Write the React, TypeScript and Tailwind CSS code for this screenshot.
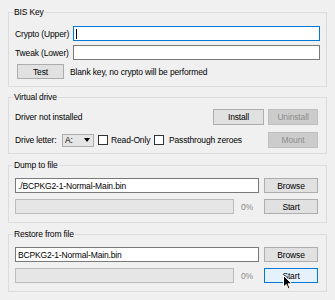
import React from "react";

function Group({ title, className, children }: { title: string; className: string; children: React.ReactNode }) {
  return (
    <div className={"relative border border-[#dcdcdc] " + className}>
      <span className="absolute top-[-7px] left-[4px] px-[1px] bg-[#f0f0f0] leading-[12px]">{title}</span>
      {children}
    </div>
  );
}

function Btn({ children, className = "", disabled = false }: { children: React.ReactNode; className?: string; disabled?: boolean }) {
  return (
    <div
      className={
        "h-full flex items-center justify-center border " +
        (disabled ? "bg-[#cccccc] border-[#bfbfbf] text-[#8c8c8c] " : "bg-[#e1e1e1] border-[#adadad] ") +
        className
      }
    >
      {children}
    </div>
  );
}

function Check() {
  return <div className="w-[10px] h-[10px] bg-white border border-[#333333] shrink-0" />;
}

export default function App() {
  return (
    <div className="relative w-[335px] h-[300px] overflow-hidden whitespace-nowrap bg-[#f0f0f0] px-[8px] pt-[12px] text-[8.5px] tracking-[-0.15px] leading-[12px] text-black font-['Liberation_Sans',Arial,sans-serif]">
      <Group title="BIS Key" className="h-[75px] pt-[13px] px-[6px] flex flex-col gap-[4px]">
        <div className="flex items-center h-[15px]">
          <span className="w-[58px] shrink-0">Crypto (Upper)</span>
          <div className="flex-1 h-full bg-white border border-[#0078d7] flex items-center pl-[2px]">
            <div className="w-px h-[10px] bg-black" />
          </div>
        </div>
        <div className="flex items-center h-[15px]">
          <span className="w-[58px] shrink-0">Tweak (Lower)</span>
          <div className="flex-1 h-full bg-white border border-[#7a7a7a]" />
        </div>
        <div className="flex items-center h-[15px] pl-[2px]">
          <Btn className="w-[47px]">Test</Btn>
          <span className="ml-[6px]">Blank key, no crypto will be performed</span>
        </div>
      </Group>

      <Group title="Virtual drive" className="mt-[10px] h-[57px] pt-[11px] pl-[6px] pr-[8px] flex flex-col gap-[7px]">
        <div className="flex items-center h-[16px]">
          <span>Driver not installed</span>
          <Btn className="ml-auto w-[51px]">Install</Btn>
          <Btn disabled className="ml-[4px] w-[50px]">Uninstall</Btn>
        </div>
        <div className="flex items-center h-[16px]">
          <span className="w-[47px] shrink-0">Drive letter:</span>
          <div className="w-[32px] h-[13px] bg-[#e5e5e5] border border-[#adadad] flex items-center pl-[2px] shrink-0">
            <span>A:</span>
            <svg className="ml-auto mr-[3px]" width="6" height="4" viewBox="0 0 6 4">
              <path d="M0 0 H6 L3 4 Z" fill="#000" />
            </svg>
          </div>
          <div className="ml-[4px]"><Check /></div>
          <span className="ml-[3px] w-[43px] shrink-0">Read-Only</span>
          <Check />
          <span className="ml-[5px]">Passthrough zeroes</span>
          <Btn disabled className="ml-auto w-[50px]">Mount</Btn>
        </div>
      </Group>

      {[
        { title: "Dump to file", path: "./BCPKG2-1-Normal-Main.bin", hover: false },
        { title: "Restore from file", path: "BCPKG2-1-Normal-Main.bin", hover: true },
      ].map((g) => (
        <Group key={g.title} title={g.title} className="mt-[11px] h-[58px] pt-[12px] pl-[6px] pr-[8px] flex flex-col gap-[6px]">
          <div className="flex items-center h-[15px]">
            <div className="flex-1 h-full bg-white border border-[#7a7a7a] flex items-center pl-[2px]">{g.path}</div>
            <Btn className="ml-[5px] w-[54px]">Browse</Btn>
          </div>
          <div className="flex items-center h-[15px]">
            <div className="w-[219px] h-full bg-[#e6e6e6] border border-[#bcbcbc]" />
            <span className="ml-[7px] text-[#8a8a8a]">0%</span>
            {g.hover ? (
              <div className="ml-auto w-[54px] h-full flex items-center justify-center border bg-[#e5f1fb] border-[#0078d7]">Start</div>
            ) : (
              <Btn className="ml-auto w-[54px]">Start</Btn>
            )}
          </div>
        </Group>
      ))}

      <svg className="absolute left-[283px] top-[275px]" width="10" height="15" viewBox="0 0 10 15">
        <path d="M0.5 0.5 V12 L3.3 9.4 L5.2 13.8 L6.9 13.1 L5.1 8.8 L8.8 8.8 Z" fill="#000" stroke="#fff" strokeWidth="1" />
      </svg>
    </div>
  );
}
